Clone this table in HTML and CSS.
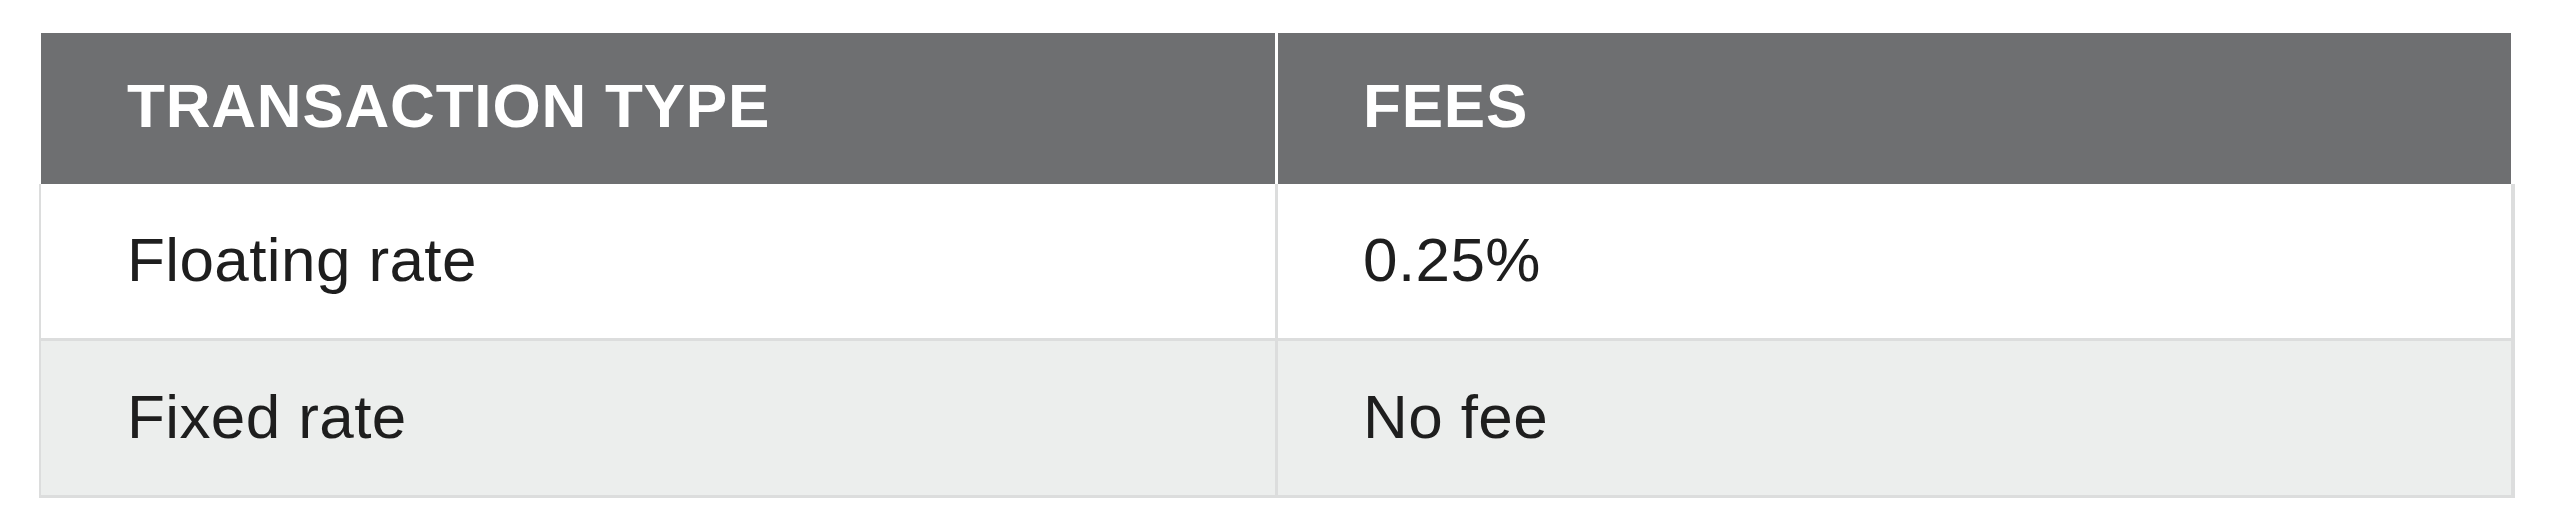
FILE: index.html
```html
<!DOCTYPE html>
<html lang="en">
<head>
<meta charset="utf-8">
<title>Fees</title>
<link rel="stylesheet" href="styles.css">
</head>
<body>
<table class="fees">
  <thead>
    <tr>
      <th class="col-type">TRANSACTION TYPE</th>
      <th class="col-fee">FEES</th>
    </tr>
  </thead>
  <tbody>
    <tr class="row-odd">
      <td class="col-type">Floating rate</td>
      <td class="col-fee">0.25%</td>
    </tr>
    <tr class="row-even">
      <td class="col-type">Fixed rate</td>
      <td class="col-fee">No fee</td>
    </tr>
  </tbody>
</table>
</body>
</html>
```
FILE: styles.css
```css
html, body {
  margin: 0;
  padding: 0;
  background: #ffffff;
}

body {
  font-family: "Liberation Sans", Arial, sans-serif;
}

.fees {
  margin: 33px 0 0 39px;
  width: 2476px;
  border-collapse: separate;
  border-spacing: 0;
  table-layout: fixed;
  font-size: 62px;
  line-height: 72px;
}

.fees th,
.fees td {
  box-sizing: border-box;
  text-align: left;
  vertical-align: top;
}

.fees th {
  background: #6e6f71;
  color: #ffffff;
  font-weight: 700;
  letter-spacing: 0.8px;
  padding: 37px 20px 42px 86px;
}

.fees th.col-type {
  width: 1239px;
  border-left: 2px solid #ffffff;
  border-right: 3px solid #ffffff;
}

.fees th.col-fee {
  border-right: 4px solid #ffffff;
  padding-left: 85px;
}

.fees td {
  color: #1e1e1e;
  font-weight: 400;
  letter-spacing: 0.4px;
  padding: 40px 20px 42px 86px;
  border-bottom: 3px solid #dcdddd;
}

.fees td.col-type {
  border-left: 2px solid #dcdddd;
  border-right: 3px solid #dcdddd;
}

.fees td.col-fee {
  border-right: 4px solid #dcdddd;
  padding-left: 85px;
}

.row-odd td {
  background: #ffffff;
}

.row-even td {
  background: #eceeed;
}
```
